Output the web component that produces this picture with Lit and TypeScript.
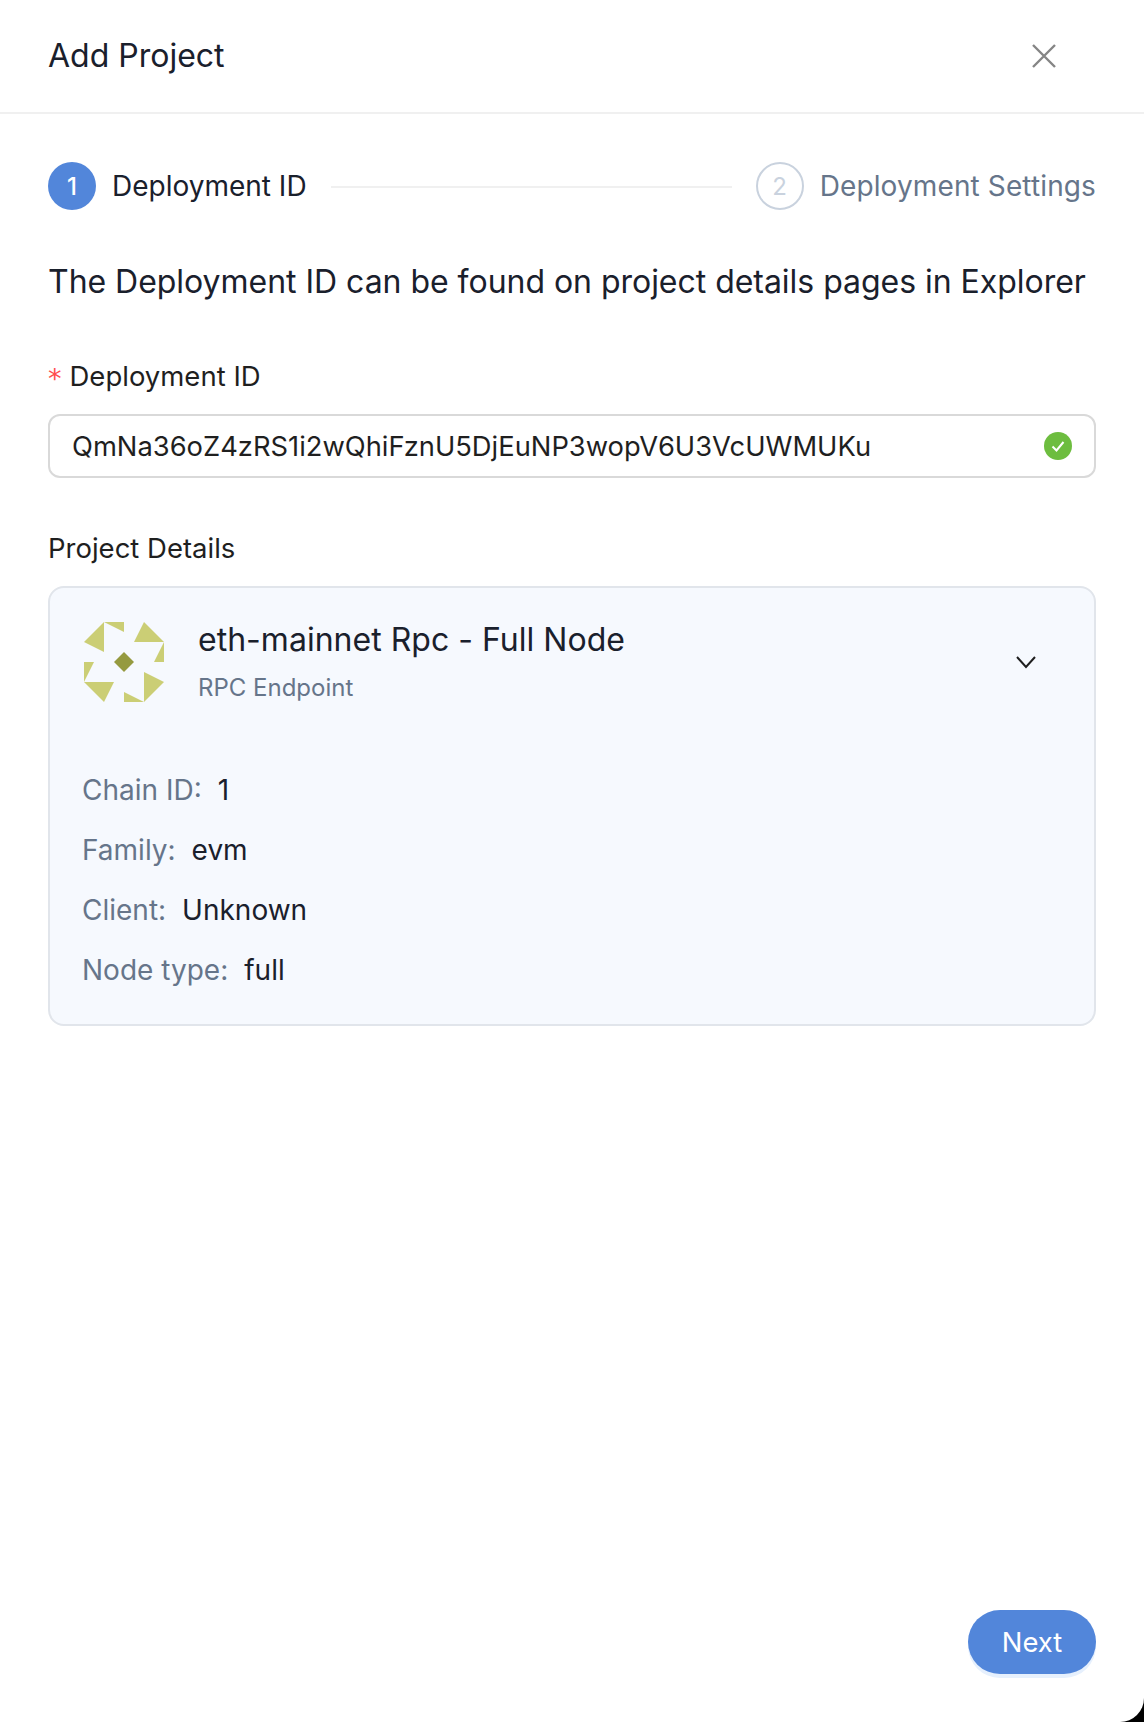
import { LitElement, html, css, svg } from "lit";
import { customElement } from "lit/decorators.js";

@customElement("app-root")
export class AppRoot extends LitElement {
  static styles = css`
    :host {
      display: block;
      width: 1144px;
      height: 1722px;
      background: #000;
      font-family: Inter, "Liberation Sans", sans-serif;
      color: #1a202c;
    }
    .panel {
      width: 100%;
      height: 100%;
      background: #fff;
      border-bottom-right-radius: 24px;
      display: flex;
      flex-direction: column;
      overflow: hidden;
    }
    .header {
      height: 112px;
      flex: none;
      display: flex;
      align-items: center;
      justify-content: space-between;
      padding: 0 88px 0 48px;
      border-bottom: 2px solid #f0f0f0;
    }
    .title { font-size: 32px; line-height: 40px; }
    .close { width: 24px; height: 24px; display: block; }
    .body {
      flex: 1;
      display: flex;
      flex-direction: column;
      padding: 48px 48px 48px;
    }
    .steps { display: flex; align-items: center; height: 48px; }
    .step { display: flex; align-items: center; gap: 16px; font-size: 28px; }
    .dot {
      width: 48px;
      height: 48px;
      box-sizing: border-box;
      border-radius: 50%;
      display: flex;
      align-items: center;
      justify-content: center;
      font-size: 24px;
    }
    .dot.on { background: #5286da; color: #fff; font-weight: 500; }
    .dot.off { border: 2px solid #c9d2de; color: #c9d2de; }
    .step.muted { color: #66758a; letter-spacing: 0.12px; }
    .line { flex: 1; height: 2px; background: #f0f0f0; margin: 2px 24px 0; }
    .intro { font-size: 32px; line-height: 40px; margin-top: 52px; white-space: nowrap; letter-spacing: -0.03px; }
    .label { font-size: 27.5px; line-height: 32px; color: #1f1f1f; display: flex; align-items: center; }
    .req {
      color: #ff4d4f;
      margin-right: 8px;
      font-family: "DejaVu Sans", sans-serif;
      font-size: 27px;
      line-height: 32px;
      transform: translateY(3px);
    }
    .label.first { margin-top: 58px; }
    .input {
      margin-top: 22px;
      height: 64px;
      box-sizing: border-box;
      border: 2px solid #d9d9d9;
      border-radius: 12px;
      display: flex;
      align-items: center;
      justify-content: space-between;
      padding: 0 22px;
      font-size: 27.33px;
      color: #1f1f1f;
    }
    .check { width: 28px; height: 28px; display: block; }
    .label.second { margin-top: 54px; }
    .card {
      margin-top: 22px;
      height: 440px;
      box-sizing: border-box;
      border: 2px solid #e1e5eb;
      border-radius: 16px;
      background: #f6f9fe;
      padding: 34px 32px 34px 34px;
    }
    .top { display: flex; align-items: flex-start; }
    .logo { width: 80px; height: 80px; display: block; flex: none; }
    .names { margin-left: 34px; flex: 1; }
    .name { font-size: 32px; line-height: 40px; margin-top: -2px; letter-spacing: 0.02px; }
    .sub { font-size: 24px; line-height: 32px; color: #66758a; margin-top: 12px; }
    .chev { width: 24px; height: 24px; display: block; margin: 28px 24px 0 0; }
    .rows { margin: 66px 0 0 -2px; display: flex; flex-direction: column; gap: 20px; }
    .row { font-size: 28px; line-height: 40px; display: flex; gap: 16px; }
    .row span:first-child { color: #66758a; }
    .foot { margin-top: auto; display: flex; justify-content: flex-end; }
    .next {
      width: 128px;
      height: 64px;
      border: none;
      border-radius: 32px;
      background: #5286da;
      box-shadow: 0 4px 0 #e6f0fd;
      color: #fff;
      font: 400 27.4px Inter, "Liberation Sans", sans-serif;
      padding: 0;
    }
  `;

  private logo() {
    const tris = [
      "20,0 0,20 20,30",
      "20,0 40,0 40,10",
      "60,0 80,20 50,20",
      "80,20 80,40 70,40",
      "60,50 80,60 60,80",
      "40,70 60,80 40,80",
      "0,60 30,60 20,80",
      "0,40 10,40 0,60",
    ];
    return html`<svg class="logo" viewBox="0 0 80 80">
      ${tris.map((p) => svg`<polygon points=${p} fill="#cbce75"></polygon>`)}
      <polygon points="40,30 50,40 40,50 30,40" fill="#959a40"></polygon>
    </svg>`;
  }

  render() {
    return html`<div class="panel">
      <div class="header">
        <div class="title">Add Project</div>
        <svg class="close" viewBox="0 0 24 24" fill="none" stroke="#858585" stroke-width="2.4">
          <path d="M1 1 L23 23 M23 1 L1 23"></path>
        </svg>
      </div>
      <div class="body">
        <div class="steps">
          <div class="step"><div class="dot on">1</div>Deployment ID</div>
          <div class="line"></div>
          <div class="step muted"><div class="dot off">2</div>Deployment Settings</div>
        </div>
        <div class="intro">The Deployment ID can be found on project details pages in Explorer</div>
        <div class="label first"><span class="req">*</span>Deployment ID</div>
        <div class="input">
          <span>QmNa36oZ4zRS1i2wQhiFznU5DjEuNP3wopV6U3VcUWMUKu</span>
          <svg class="check" viewBox="0 0 28 28">
            <circle cx="14" cy="14" r="14" fill="#6dbd3f"></circle>
            <path d="M8.5 14.5 L12.5 18.5 L19.5 10" fill="none" stroke="#fff" stroke-width="2"></path>
          </svg>
        </div>
        <div class="label second">Project Details</div>
        <div class="card">
          <div class="top">
            ${this.logo()}
            <div class="names">
              <div class="name">eth-mainnet Rpc - Full Node</div>
              <div class="sub">RPC Endpoint</div>
            </div>
            <svg class="chev" viewBox="0 0 24 24" fill="none" stroke="#1f1f1f" stroke-width="2">
              <path d="M3 7 L12 17 L21 7"></path>
            </svg>
          </div>
          <div class="rows">
            <div class="row"><span>Chain ID:</span><span>1</span></div>
            <div class="row"><span>Family:</span><span>evm</span></div>
            <div class="row"><span>Client:</span><span>Unknown</span></div>
            <div class="row"><span>Node type:</span><span>full</span></div>
          </div>
        </div>
        <div class="foot"><button class="next">Next</button></div>
      </div>
    </div>`;
  }
}
